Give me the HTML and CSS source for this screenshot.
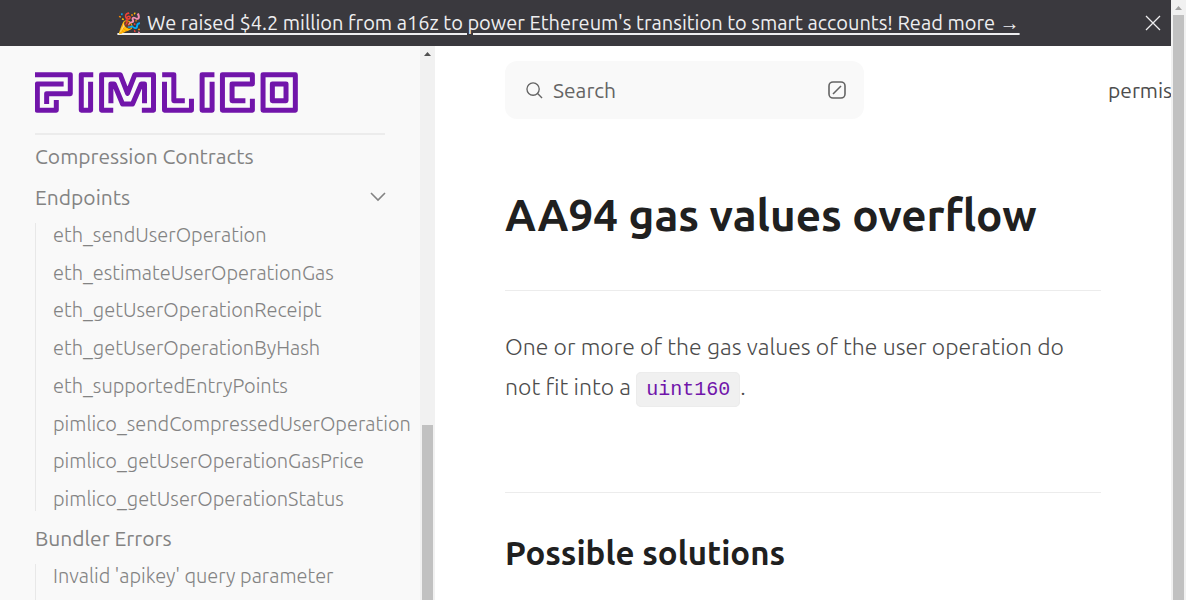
FILE: index.html
```html
<!DOCTYPE html>
<html lang="en">
<head>
<meta charset="utf-8">
<title>AA94 gas values overflow – Pimlico Docs</title>
<link rel="stylesheet" href="styles.css">
</head>
<body>
<div class="page">
  <div class="banner">
    <a class="banner-link" href="#">🎉 We raised $4.2 million from a16z to power Ethereum's transition to smart accounts! Read more →</a>
    <button class="banner-close" aria-label="Close banner">
      <svg width="16" height="16" viewBox="0 0 16 16" fill="none" stroke="currentColor" stroke-width="1.3"><path d="M1 1l14 14M15 1L1 15"/></svg>
    </button>
  </div>
  <div class="columns">
    <aside class="sidebar">
      <div class="sidebar-body">
        <a class="logo" href="#" aria-label="Pimlico">
          <svg width="263" height="41" viewBox="45 66 790 123" fill="none" stroke="currentColor" stroke-width="15" stroke-linejoin="round">
            <path d="M45 74H151V131H80V162M131 102H52V181H109V150"/>
            <path d="M220 74H184V181H212V95"/>
            <path d="M280 181H245V74H301L323 130L345 74H401V181H366M273 160V102H283L308 162H338L364 102H374V160"/>
            <path d="M427 74H462V152H495M434 95V181H515V146"/>
            <path d="M584 74H547V181H577V95"/>
            <path d="M677 152H637V102H698V74H608V181H698V146"/>
            <path d="M730 74H827V181H730ZM758 102H799V152H758Z"/>
          </svg>
        </a>
        <nav class="nav">
          <a class="nav-title" href="#">Compression Contracts</a>
          <button class="nav-title nav-toggle">Endpoints
            <svg width="16" height="10" viewBox="0 0 16 10" fill="none" stroke="currentColor" stroke-width="1.6"><path d="M1 1l7 7 7-7"/></svg>
          </button>
          <div class="nav-items nav-items-full">
            <a href="#">eth_sendUserOperation</a>
            <a href="#">eth_estimateUserOperationGas</a>
            <a href="#">eth_getUserOperationReceipt</a>
            <a href="#">eth_getUserOperationByHash</a>
            <a href="#">eth_supportedEntryPoints</a>
            <a href="#">pimlico_sendCompressedUserOperation</a>
            <a href="#">pimlico_getUserOperationGasPrice</a>
            <a href="#">pimlico_getUserOperationStatus</a>
          </div>
          <a class="nav-title" href="#">Bundler Errors</a>
          <div class="nav-items">
            <a href="#">Invalid 'apikey' query parameter</a>
          </div>
        </nav>
      </div>
      <div class="scrollbar">
        <svg class="scroll-arrow" width="15" height="15" viewBox="0 0 15 15"><path d="M4 10h7L7.500 6z" fill="#505050"/></svg>
        <div class="scroll-gap"></div>
        <div class="scroll-thumb"></div>
      </div>
    </aside>
    <main class="main">
      <header class="topbar">
        <button class="search">
          <svg width="17" height="17" viewBox="0 0 18 18" fill="none" stroke="currentColor" stroke-width="1.4"><circle cx="7.500" cy="7.500" r="6.500"/><path d="M12 12l5 5"/></svg>
          <span class="search-label">Search</span>
          <svg width="18" height="18" viewBox="0 0 18 18" fill="none" stroke="currentColor" stroke-width="1.6"><rect x="1" y="1" width="16" height="16" rx="4"/><path d="M5 13l8-8"/></svg>
        </button>
        <a class="top-link" href="#">permissionless.js</a>
      </header>
      <article class="article">
        <h1>AA94 gas values overflow</h1>
        <p>One or more of the gas values of the user operation do not fit into a <code>uint160</code>.</p>
        <h2>Possible solutions</h2>
      </article>
    </main>
  </div>
</div>
<div class="scrollbar">
  <svg class="scroll-arrow" width="15" height="15" viewBox="0 0 15 15"><path d="M4 10h7L7.500 6z" fill="#a3a3a3"/></svg>
  <div class="scroll-thumb"></div>
</div>
</body>
</html>
```
FILE: styles.css
```css
* { box-sizing: border-box; }
body {
  margin: 0;
  height: 100vh;
  display: flex;
  overflow: hidden;
  background: #fff;
  color: #4c4c4c;
  font-family: Ubuntu, "Noto Sans", sans-serif;
}
a { color: inherit; text-decoration: none; }
button { font: inherit; color: inherit; border: 0; background: none; padding: 0; text-align: left; }
svg { display: block; flex: none; }
.page { flex: 1; min-width: 0; display: flex; flex-direction: column; overflow: hidden; }
.banner {
  flex: none;
  height: 46px;
  display: flex;
  align-items: center;
  padding-right: 10px;
  background: #3a393e;
  color: #eeeef0;
  font-size: 20px;
  white-space: nowrap;
}
.banner-link { margin: 0 auto; text-decoration: underline; text-decoration-thickness: 2px; text-underline-offset: 3px; }
.banner-close { flex: none; width: 24px; display: flex; justify-content: flex-end; }
.columns { flex: 1; min-height: 0; display: flex; }
.sidebar { flex: none; width: 435px; display: flex; background: #f9f9f9; color: #838383; }
.sidebar-body { flex: 1; min-width: 0; padding: 26px 8px 0 35px; overflow: hidden; }
.logo { display: block; margin-right: 27px; padding-bottom: 20px; border-bottom: 2px solid #ececec; color: #7115aa; }
.nav-title { display: flex; align-items: center; justify-content: space-between; height: 41px; font-size: 21px; font-weight: 400; }
.nav-toggle { width: 351px; }
.nav-items { border-left: 1px solid #e8e8e8; padding: 0 0 14px 17px; margin: 6px 0; font-size: 20px; font-weight: 300; }
.nav-items a { display: block; line-height: 24px; white-space: nowrap; }
.nav-items-full { display: flex; flex-direction: column; justify-content: space-between; height: 288px; padding-bottom: 0; }
.scrollbar { flex: none; width: 15px; display: flex; flex-direction: column; background: #f1f1f1; }
.scroll-gap { flex: 364; }
.scroll-thumb { flex: 175; margin: 0 2px; background: #c1c1c1; }
.main { flex: 1; min-width: 0; padding: 15px 0 0 70px; overflow: hidden; }
.topbar { display: flex; align-items: center; justify-content: space-between; gap: 244px; white-space: nowrap; font-size: 21px; }
.search {
  flex: none;
  width: 359px;
  height: 58px;
  display: flex;
  align-items: center;
  gap: 10px;
  padding: 0 18px 0 21px;
  border-radius: 12px;
  background: #f9f9f9;
  color: #646464;
}
.search-label { flex: 1; }
.article { margin-right: 70px; }
h1, h2, p { margin: 0; }
h1, h2 { color: #202020; font-weight: 600; }
h1 { padding: 63px 0 42px; border-bottom: 1px solid #ececec; font-size: 44px; line-height: 66px; white-space: nowrap; }
p { padding: 36px 0 82px; border-bottom: 1px solid #ececec; font-size: 23px; line-height: 40px; font-weight: 300; }
code {
  padding: 5px 9px;
  border: 1px solid #ececec;
  border-radius: 5px;
  background: #f0f0f0;
  color: #7115aa;
  font-family: "Liberation Mono", monospace;
  font-size: 20px;
}
h2 { padding-top: 37px; font-size: 33px; line-height: 46px; }
```
